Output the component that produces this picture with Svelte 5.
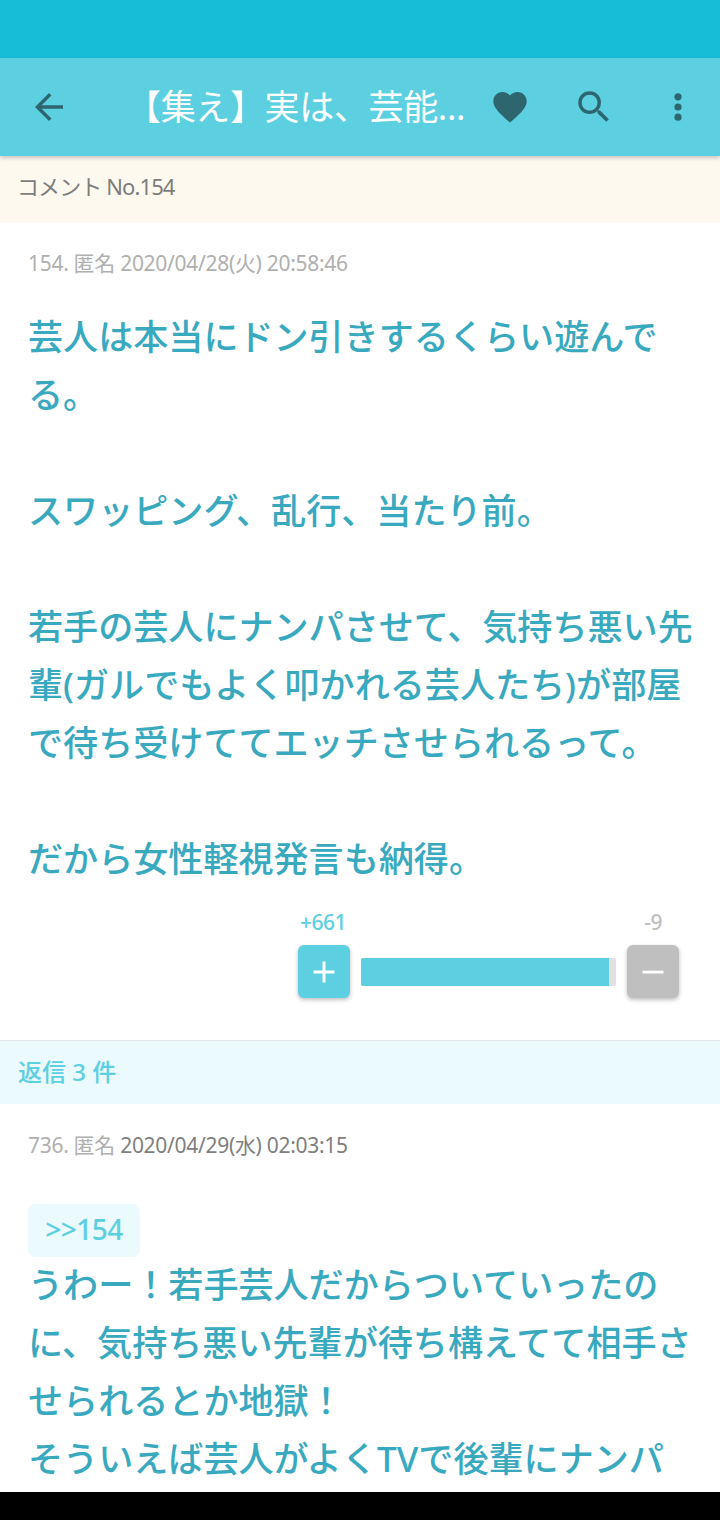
<script>
  const first = [
    '芸人は本当にドン引きするくらい遊んでる。',
    '',
    'スワッピング、乱行、当たり前。',
    '',
    '若手の芸人にナンパさせて、気持ち悪い先輩(ガルでもよく叩かれる芸人たち)が部屋で待ち受けててエッチさせられるって。',
    '',
    'だから女性軽視発言も納得。'
  ];
  const second = [
    'うわー\uFF01若手芸人だからついていったのに、気持ち悪い先輩が待ち構えてて相手させられるとか地獄\uFF01',
    'そういえば芸人がよくTVで後輩にナンパ'
  ];
</script>

<div class="phone">
  <div class="status"></div>
  <header class="toolbar">
    <button class="icon back" aria-label="戻る">
      <svg width="42" height="42" viewBox="0 0 24 24"><path d="M20 11H7.83l5.59-5.59L12 4l-8 8 8 8 1.41-1.41L7.83 13H20z"/></svg>
    </button>
    <h1>【集え】実は、芸能...</h1>
    <button class="icon heart" aria-label="お気に入り">
      <svg width="40" height="40" viewBox="0 0 24 24"><path d="M12 21.35l-1.45-1.32C5.4 15.36 2 12.28 2 8.5 2 5.42 4.42 3 7.5 3c1.74 0 3.41.81 4.5 2.09C13.09 3.81 14.76 3 16.5 3 19.58 3 22 5.42 22 8.5c0 3.78-3.4 6.86-8.55 11.54z"/></svg>
    </button>
    <button class="icon search" aria-label="検索">
      <svg width="42" height="42" viewBox="0 0 24 24"><path d="M15.5 14h-.79l-.28-.27A6.47 6.47 0 0 0 16 9.5 6.5 6.5 0 1 0 9.5 16c1.61 0 3.09-.59 4.23-1.57l.27.28v.79l5 4.99L20.49 19zm-6 0C7.01 14 5 11.99 5 9.5S7.01 5 9.5 5 14 7.01 14 9.5 11.99 14 9.5 14z"/></svg>
    </button>
    <button class="icon more" aria-label="メニュー">
      <svg width="48" height="48" viewBox="0 0 24 24"><circle cx="12" cy="6.9" r="1.8"/><circle cx="12" cy="12" r="1.8"/><circle cx="12" cy="17.1" r="1.8"/></svg>
    </button>
  </header>

  <div class="crumb">コメント No.154</div>

  <article class="comment top">
    <p class="meta">154. 匿名 2020/04/28(火) 20:58:46</p>
    <div class="body">
      {#each first as line}
        <div class="line">{line}</div>
      {/each}
    </div>
    <div class="votes">
      <div class="counts"><span class="plus">+661</span><span class="minus">-9</span></div>
      <div class="controls">
        <button class="vote up" aria-label="プラス"><svg width="24" height="24" viewBox="0 0 24 24"><path d="M10.5 1.5h3v9h9v3h-9v9h-3v-9h-9v-3h9z"/></svg></button>
        <div class="bar"><div class="fill" style="width: 97.2%"></div></div>
        <button class="vote down" aria-label="マイナス"><svg width="24" height="24" viewBox="0 0 24 24"><path d="M1.5 10.7h21v2.8h-21z"/></svg></button>
      </div>
    </div>
  </article>

  <div class="replies">返信 3 件</div>

  <article class="comment second">
    <p class="meta">736. 匿名 <span class="date">2020/04/29(水) 02:03:15</span></p>
    <div class="tag">&gt;&gt;154</div>
    <div class="body">
      {#each second as line}
        <div class="line">{line}</div>
      {/each}
    </div>
  </article>

  <div class="nav"></div>
</div>

<style>
  :global(body) { margin: 0; background: #fff; }
  .phone {
    position: relative;
    width: 720px;
    height: 1520px;
    overflow: hidden;
    background: #fff;
    font-family: "Noto Sans", "Noto Sans CJK JP", sans-serif;
  }
  .status { height: 58px; background: #17bcd5; }
  .toolbar {
    position: relative;
    z-index: 1;
    display: flex;
    align-items: center;
    height: 98px;
    background: #5ccfe0;
    box-shadow: 0 2px 4px rgba(0, 0, 0, .22);
  }
  .icon {
    display: flex;
    align-items: center;
    justify-content: center;
    flex: none;
    padding: 0;
    border: 0;
    background: none;
    fill: #2e6670;
  }
  .back { width: 48px; margin-left: 25px; }
  h1 {
    flex: none;
    margin: 0 0 0 53px;
    width: 364px;
    color: #fff;
    font-size: 35px;
    font-weight: 400;
    line-height: 40px;
    white-space: nowrap;
    letter-spacing: -.35px;
  }
  .heart { width: 40px; }
  .search { width: 42px; margin-left: 43px; }
  .more { width: 48px; margin-left: 39px; }
  .crumb {
    height: 67px;
    padding-left: 17px;
    background: #fef9ef;
    color: #7d7d7d;
    font-size: 22px;
    line-height: 60px;
    letter-spacing: -.9px;
  }
  .comment { padding: 0 28px; }
  .meta {
    margin: 0;
    padding-top: 24px;
    color: #b0b0b0;
    font-size: 21px;
    line-height: 32px;
    letter-spacing: -.3px;
  }
  .second .meta { padding-top: 25px; }
  .date { color: #7f7f7f; }
  .body {
    margin: 28px -3px 0 0;
    color: #39a9c0;
    font-size: 35.1px;
    font-weight: 500;
    line-height: 58px;
  }
  .line { min-height: 58px; }
  .votes { width: 381px; margin: 19px 0 0 270px; }
  .counts {
    display: flex;
    justify-content: space-between;
    font-size: 21px;
    font-weight: 500;
    line-height: 32px;
    letter-spacing: -.5px;
  }
  .plus { margin-left: 2px; color: #5ccfe0; }
  .minus { margin-right: 17px; color: #bfbfbf; }
  .controls { display: flex; align-items: center; gap: 11px; margin-top: 7px; }
  .vote {
    display: flex;
    align-items: center;
    justify-content: center;
    flex: none;
    width: 52px;
    height: 53px;
    padding: 0;
    border: 0;
    border-radius: 6px;
    fill: #fff;
    box-shadow: 0 2px 4px rgba(0, 0, 0, .25);
  }
  .up { background: #5ccfe0; }
  .down { background: #bfbfbf; }
  .bar {
    flex: 1;
    height: 28px;
    overflow: hidden;
    border-radius: 2px;
    background: #e0e0e0;
  }
  .fill { height: 100%; background: #5ccfe0; }
  .replies {
    height: 63px;
    margin-top: 42px;
    padding-left: 18px;
    border-top: 1px solid #e3e6e8;
    background: #ebfafc;
    color: #5ccfe0;
    font-size: 24px;
    font-weight: 500;
    line-height: 62px;
  }
  .tag {
    width: 112px;
    height: 53px;
    margin-top: 43px;
    border-radius: 8px;
    background: #ebfafc;
    color: #5ccfe0;
    font-size: 28px;
    font-weight: 500;
    line-height: 51px;
    text-align: center;
    letter-spacing: -.5px;
  }
  .second .tag + .body { margin-top: -2px; }
  .nav {
    position: absolute;
    left: 0;
    right: 0;
    bottom: 0;
    height: 28px;
    background: #000;
  }
</style>
